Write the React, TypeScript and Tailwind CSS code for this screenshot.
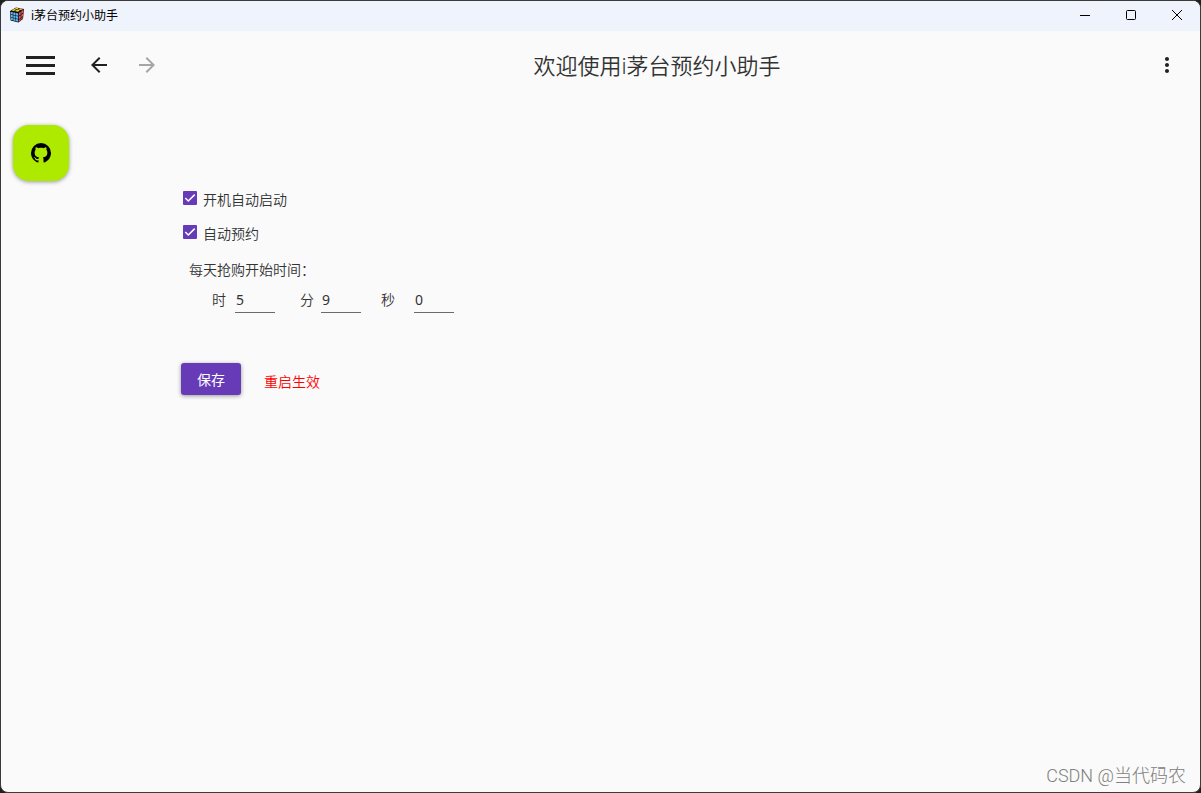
import { useState } from 'react'
import { MdArrowBack, MdArrowForward, MdMoreVert } from 'react-icons/md'

function CubeIcon() {
  return (
    <svg width="14" height="16" viewBox="0 0 14 16" aria-hidden="true">
      <path d="M0 4 6 0.5 14 2 13 12 8.5 15.5 0.5 13.5Z" fill="#111" />
      <path d="M1.6 3.4 4 2 6.2 2.5 4 3.9ZM4.6 1.8 6.6 0.7 8.8 1.2 7 2.3ZM5 4 7.4 2.6 9.8 3.2 8 4.7ZM8.2 2.4 10 1.4 13 2 11 3.1Z" fill="#fbd12e" />
      <path d="M0.6 4.9 2.8 5.3V7.6L0.7 7.2ZM3.3 5.4 5.4 5.8V8.2L3.3 7.8ZM5.9 5.9 8.2 6.4V8.8L5.9 8.4ZM0.8 7.8 2.8 8.2V10.5L0.9 10.1ZM3.3 8.4 5.4 8.8V11.1L3.3 10.7ZM5.9 9 8.2 9.5V11.8L5.9 11.4ZM1 10.7 2.8 11.1V13.3L1.1 12.9ZM3.3 11.3 5.4 11.7V13.9L3.3 13.4ZM5.9 12 8.2 12.4V14.7L5.9 14.1Z" fill="#5cb8fa" />
      <path d="M9 5.9 10.7 4.6V7.4L9 8.6ZM11.3 4.2 13.3 2.8V5.6L11.3 6.9ZM9 9.4 10.7 8.2V10.9L9 12.1ZM11.3 7.7 13.1 6.4V9L11.3 10.3ZM9 12.9 10.7 11.6V13.3L9 14.6ZM11.3 11.1 12.7 10V11.7L11.3 12.8Z" fill="#f0525a" />
    </svg>
  )
}

function GithubIcon() {
  return (
    <svg width="24" height="24" viewBox="0 0 24 24" aria-hidden="true">
      <path
        fill="#000"
        d="M12 2A10 10 0 0 0 2 12C2 16.42 4.87 20.17 8.84 21.5C9.34 21.58 9.5 21.27 9.5 21V19.31C6.73 19.91 6.14 17.97 6.14 17.97C5.68 16.81 5.03 16.5 5.03 16.5C4.12 15.88 5.1 15.9 5.1 15.9C6.1 15.97 6.63 16.93 6.63 16.93C7.5 18.45 8.97 18 9.54 17.76C9.63 17.11 9.89 16.67 10.17 16.42C7.95 16.17 5.62 15.31 5.62 11.5C5.62 10.39 6 9.5 6.65 8.79C6.55 8.54 6.2 7.5 6.75 6.15C6.75 6.15 7.59 5.88 9.5 7.17C10.29 6.95 11.15 6.84 12 6.84C12.85 6.84 13.71 6.95 14.5 7.17C16.41 5.88 17.25 6.15 17.25 6.15C17.8 7.5 17.45 8.54 17.35 8.79C18 9.5 18.38 10.39 18.38 11.5C18.38 15.32 16.04 16.16 13.81 16.41C14.17 16.72 14.5 17.33 14.5 18.26V21C14.5 21.27 14.66 21.59 15.17 21.5C19.14 20.16 22 16.42 22 12A10 10 0 0 0 12 2Z"
      />
    </svg>
  )
}

function TitleBar() {
  return (
    <header className="flex h-[30px] items-start bg-[#eff3fb] pl-[9px]">
      <span className="flex h-7 items-center">
        <CubeIcon />
      </span>
      <span className="ml-[7px] flex-1 text-[12px] leading-[30px] text-black">i茅台预约小助手</span>
      <button aria-label="最小化" className="flex h-7 w-[46px] items-center justify-center">
        <svg width="12" height="12" viewBox="0 0 12 12" fill="none" stroke="#000">
          <path d="M1 6.5h10" />
        </svg>
      </button>
      <button aria-label="最大化" className="flex h-7 w-[46px] items-center justify-center">
        <svg width="12" height="12" viewBox="0 0 12 12" fill="none" stroke="#000">
          <rect x="1.5" y="1.5" width="9" height="9" rx="1" />
        </svg>
      </button>
      <button aria-label="关闭" className="flex h-7 w-[46px] items-center justify-center">
        <svg width="12" height="12" viewBox="0 0 12 12" fill="none" stroke="#000">
          <path d="M1 1l10 10M11 1L1 11" />
        </svg>
      </button>
    </header>
  )
}

function ToolBar() {
  return (
    <nav className="flex h-[68px] items-center pl-[25px] pr-[21px]">
      <button aria-label="菜单" className="flex w-[29px] flex-col gap-[5px]">
        <span className="h-[3px] w-full bg-[#212121]" />
        <span className="h-[3px] w-full bg-[#212121]" />
        <span className="h-[3px] w-full bg-[#212121]" />
      </button>
      <button aria-label="后退" className="ml-8">
        <MdArrowBack size={24} color="#212121" />
      </button>
      <button aria-label="前进" className="ml-6" disabled>
        <MdArrowForward size={24} color="#a6a6a6" />
      </button>
      <h1 className="flex-1 text-center text-[22px] font-[350] leading-8 text-[#333]">欢迎使用i茅台预约小助手</h1>
      <button aria-label="更多">
        <MdMoreVert size={24} color="#212121" />
      </button>
    </nav>
  )
}

type CheckProps = { label: string; checked: boolean; onChange: (v: boolean) => void }

function Check({ label, checked, onChange }: CheckProps) {
  return (
    <label className="flex h-[34px] items-center gap-1.5">
      <span className="grid h-3.5 w-3.5">
        <input
          type="checkbox"
          checked={checked}
          onChange={(e) => onChange(e.target.checked)}
          className="col-start-1 row-start-1 h-3.5 w-3.5 appearance-none rounded-[1px] border-2 border-[#5a5a5a] checked:border-[#673ab7] checked:bg-[#673ab7]"
        />
        {checked && (
          <svg viewBox="0 0 14 14" className="pointer-events-none col-start-1 row-start-1 h-3.5 w-3.5" fill="none" stroke="#fff" strokeWidth="1.5">
            <path d="M2.3 7 5.3 10 11.7 3.6" />
          </svg>
        )}
      </span>
      <span className="pt-1">{label}</span>
    </label>
  )
}

type TimeProps = { label: string; value: string; onChange: (v: string) => void; className: string }

function TimeField({ label, value, onChange, className }: TimeProps) {
  return (
    <label className={className}>
      {label}
      <input
        type="text"
        value={value}
        onChange={(e) => onChange(e.target.value)}
        className="h-[26px] w-10 border-b border-[#6b6b6b] bg-transparent px-px text-[14px] font-normal outline-none"
      />
    </label>
  )
}

export default function App() {
  const [autoStart, setAutoStart] = useState(true)
  const [autoReserve, setAutoReserve] = useState(true)
  const [hour, setHour] = useState('5')
  const [minute, setMinute] = useState('9')
  const [second, setSecond] = useState('0')

  return (
    <div className="min-h-screen bg-[#1f1f1f] font-['Noto_Sans','Noto_Sans_CJK_SC',sans-serif]">
      <div className="flex min-h-screen flex-col overflow-hidden rounded-lg border border-[#3a3a3a] bg-[#fafafa]">
        <TitleBar />
        <ToolBar />

        <div className="flex flex-1">
          <aside className="w-[180px] pl-3 pt-[26px]">
            <a
              href="#github"
              aria-label="GitHub"
              className="flex h-14 w-14 items-center justify-center rounded-2xl bg-[#aeea00] shadow-[0_1px_4px_rgba(0,0,0,0.4)]"
            >
              <GithubIcon />
            </a>
          </aside>

          <main className="flex-1 pt-[82px] text-[14px] font-[350] leading-5 text-[#333]">
            <div className="pl-0.5">
              <Check label="开机自动启动" checked={autoStart} onChange={setAutoStart} />
              <Check label="自动预约" checked={autoReserve} onChange={setAutoReserve} />
            </div>

            <p className="mt-[11px] pl-2">每天抢购开始时间：</p>
            <div className="mt-[7px] flex pl-[31px]">
              <TimeField className="flex items-center gap-[9px]" label="时" value={hour} onChange={setHour} />
              <TimeField className="ml-[25px] flex items-center gap-[7px]" label="分" value={minute} onChange={setMinute} />
              <TimeField className="ml-5 flex items-center gap-[19px]" label="秒" value={second} onChange={setSecond} />
            </div>

            <div className="mt-[50px] flex items-center">
              <button className="h-8 w-[60px] rounded-[3px] bg-[#673ab7] pt-0.5 font-normal text-white shadow-[0_1px_4px_rgba(0,0,0,0.4)]">
                保存
              </button>
              <span className="ml-[23px] pt-1.5 text-[#f00]">重启生效</span>
            </div>
          </main>
        </div>

        <footer className="px-3.5 pb-1 text-right font-['Roboto','Noto_Sans_CJK_SC',sans-serif] text-[18px] font-light leading-6 text-[#808080]">
          CSDN @当代码农
        </footer>
      </div>
    </div>
  )
}
